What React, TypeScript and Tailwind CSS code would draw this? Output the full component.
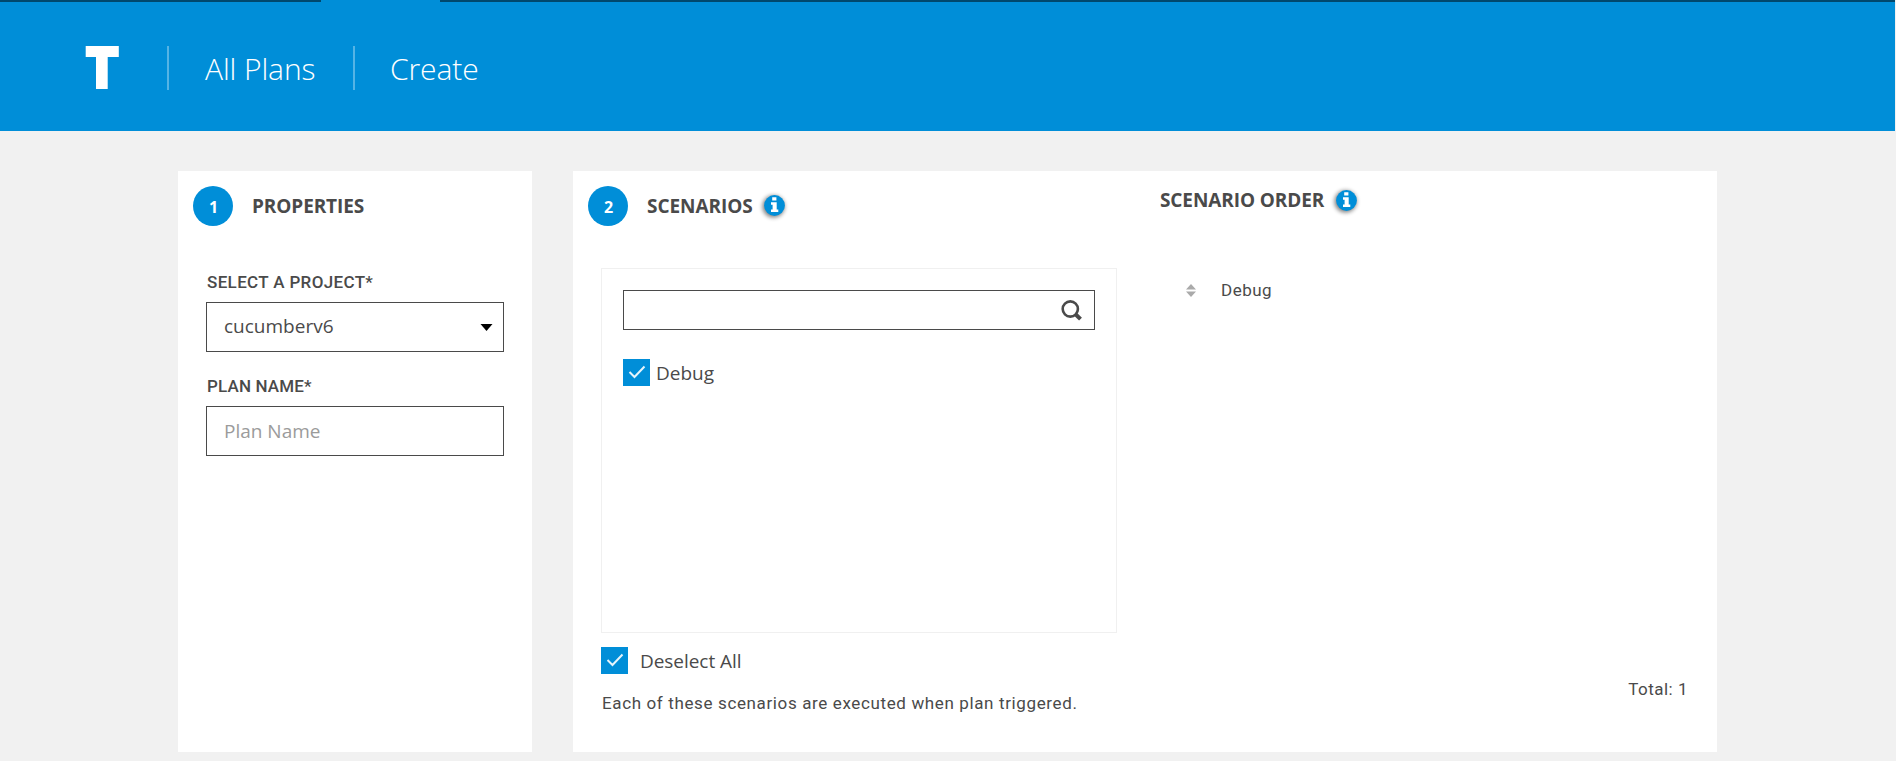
import React from "react";

const SANS = "font-['Open_Sans',sans-serif]";
const DIN = "font-['Roboto',sans-serif]";

function StepBadge({ n }: { n: number }) {
  return (
    <span className="flex h-10 w-10 shrink-0 items-center justify-center rounded-full bg-[#008ed8] pt-[2px] pl-px text-base leading-none font-bold text-white">
      {n}
    </span>
  );
}

function InfoIcon() {
  return (
    <svg className="mb-px h-[29px] w-[29px] shrink-0 overflow-visible" viewBox="0 0 29 29">
      <circle cx="13.5" cy="15.5" r="11" fill="#000" opacity=".5" style={{ filter: "blur(2px)" }} />
      <circle cx="14.5" cy="14.5" r="10.4" fill="#008ed8" />
      <path d="M12.2 6.2h4.2v3.2h-4.2zM11 11.2h5.7v7.3h1.6v2.6H11v-2.6h1.6v-4.7H11z" fill="#fff" />
    </svg>
  );
}

function Checkbox() {
  return (
    <span className="flex h-[27px] w-[27px] shrink-0 bg-[#008ed8]">
      <svg className="h-[27px] w-[27px]" viewBox="0 0 27 27" fill="none" stroke="#e6f4fb" strokeWidth="2">
        <path d="M6.5 13l5 5L21.5 7.5" />
      </svg>
    </span>
  );
}

export default function App() {
  return (
    <div className={`h-[761px] w-full overflow-hidden bg-[#f1f1f1] text-[#4a4a4a] ${SANS}`}>
      <header className="mr-px h-[131px] bg-[#008ed8]">
        <div className="flex h-0.5 justify-between">
          <div className="w-[321px] bg-[#00486d]" />
          <div className="w-[1455px] bg-[#00486d]" />
        </div>
        <nav className="flex h-[129px] pt-11 text-[30px] leading-[46px] font-light text-white">
          <svg className="ml-[85px] h-[43px] w-[34px]" viewBox="0 0 34 43">
            <path d="M.7 0h33.1v11H22.7v32H11V11H.7z" fill="#fff" />
          </svg>
          <div className="ml-12 h-11 w-0.5 bg-[#55b4e5]" />
          <a className="ml-[36px] w-[148px] tracking-[-0.1px]">All Plans</a>
          <div className="h-11 w-0.5 bg-[#55b4e5]" />
          <a className="ml-[35px] tracking-[-0.1px]">Create</a>
        </nav>
      </header>

      <main className="flex gap-[41px] pt-10 pl-[178px]">
        <section className="h-[581px] w-[354px] bg-white pt-[15px]">
          <div className="flex items-center pl-[15px]">
            <StepBadge n={1} />
            <h2 className="ml-[19px] text-[19px] font-bold tracking-[-0.1px]">PROPERTIES</h2>
          </div>
          <div className="px-7">
            <label className={`mt-[41px] mb-1 flex h-[31px] items-center pl-px text-[17px] font-medium tracking-[0.35px] ${DIN}`}>SELECT A PROJECT*</label>
            <div className="flex h-[50px] w-[298px] items-center justify-between border border-[#4a4a4a] pr-[10px] pl-[17px] text-[19px]">
              <span className="pb-0.5">cucumberv6</span>
              <svg className="h-[7px] w-[13px]" viewBox="0 0 13 7">
                <path d="M.5 0h12l-6 7z" fill="#000" />
              </svg>
            </div>
            <label className={`mt-[19px] mb-1 flex h-[31px] items-center pl-px text-[17px] font-medium tracking-[0.15px] ${DIN}`}>PLAN NAME*</label>
            <div className="flex h-[50px] w-[298px] items-center border border-[#4a4a4a] pl-[17px] text-[19px] text-[#9b9b9b]">Plan Name</div>
          </div>
        </section>

        <section className="flex h-[581px] w-[1144px] bg-white">
          <div className="w-[544px] pt-[15px]">
            <div className="flex items-center pl-[15px]">
              <StepBadge n={2} />
              <h2 className="mr-[7px] ml-[19px] text-[19px] font-bold tracking-[-0.05px]">SCENARIOS</h2>
              <InfoIcon />
            </div>
            <div className="mt-[42px] ml-7 h-[365px] w-[516px] border border-[#f0f0f0] px-[21px] pt-[21px]">
              <div className="flex h-10 items-center justify-end border border-[#4a4a4a] pr-3">
                <svg className="h-[21px] w-[21px]" viewBox="0 0 21 21" fill="none" stroke="#4a4a4a">
                  <circle cx="9.3" cy="9" r="7.6" strokeWidth="2.6" />
                  <path d="M14.8 14.5l4.700 4.700" strokeWidth="4" />
                </svg>
              </div>
              <div className="mt-[29px] flex h-[27px] items-center gap-[6px] text-[19px]">
                <Checkbox />
                <span className="pt-px">Debug</span>
              </div>
            </div>
            <div className="mt-[14px] ml-7 flex h-[27px] items-center gap-3 text-[19px]">
              <Checkbox />
              <span className="pt-0.5 tracking-[-0.05px]">Deselect All</span>
            </div>
            <p className={`mt-[17px] ml-7 pl-px text-[17px] leading-6 tracking-[0.63px] whitespace-nowrap ${DIN}`}>Each of these scenarios are executed when plan triggered.</p>
          </div>
          <div className="flex flex-1 flex-col pl-[43px]">
            <div className="mt-[15px] flex h-[29px] items-center gap-2">
              <h2 className="text-[19px] font-bold tracking-[-0.1px]">SCENARIO ORDER</h2>
              <InfoIcon />
            </div>
            <div className={`mt-[63px] flex h-6 items-center pl-[26px] text-[17px] tracking-[0.5px] ${DIN}`}>
              <svg className="mr-[25px] h-[13px] w-[10px]" viewBox="0 0 10 13" fill="#aaa">
                <path d="M5 0l5 5.500H0zM5 13l5-5.500H0z" />
              </svg>
              <span className="pt-px">Debug</span>
            </div>
            <div className={`mt-[375px] pr-[29px] text-right text-[17px] leading-6 tracking-[0.5px] ${DIN}`}>Total: 1</div>
          </div>
        </section>
      </main>
    </div>
  );
}
